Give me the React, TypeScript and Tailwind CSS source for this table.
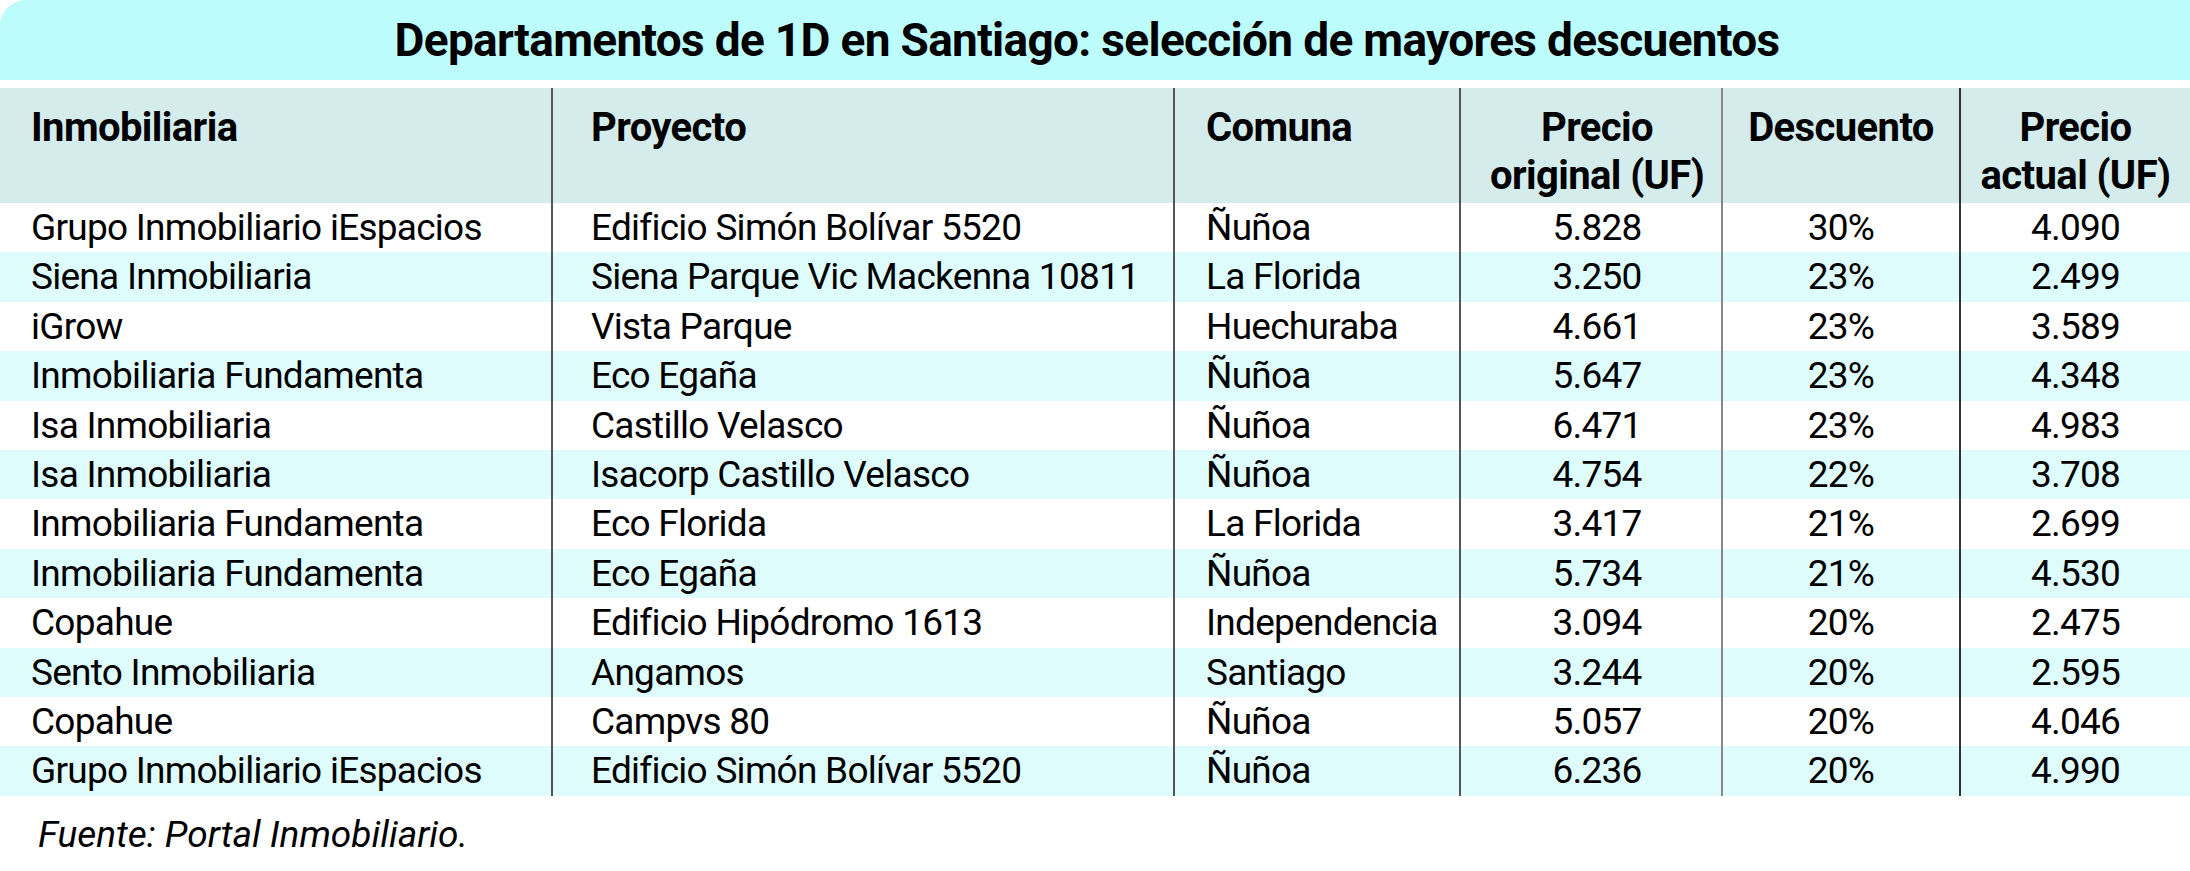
import React from 'react'

type Row = {
  inmobiliaria: string
  proyecto: string
  comuna: string
  original: string
  descuento: string
  actual: string
}

const rows: Row[] = [
  { inmobiliaria: 'Grupo Inmobiliario iEspacios', proyecto: 'Edificio Simón Bolívar 5520', comuna: 'Ñuñoa', original: '5.828', descuento: '30%', actual: '4.090' },
  { inmobiliaria: 'Siena Inmobiliaria', proyecto: 'Siena Parque Vic Mackenna 10811', comuna: 'La Florida', original: '3.250', descuento: '23%', actual: '2.499' },
  { inmobiliaria: 'iGrow', proyecto: 'Vista Parque', comuna: 'Huechuraba', original: '4.661', descuento: '23%', actual: '3.589' },
  { inmobiliaria: 'Inmobiliaria Fundamenta', proyecto: 'Eco Egaña', comuna: 'Ñuñoa', original: '5.647', descuento: '23%', actual: '4.348' },
  { inmobiliaria: 'Isa Inmobiliaria', proyecto: 'Castillo Velasco', comuna: 'Ñuñoa', original: '6.471', descuento: '23%', actual: '4.983' },
  { inmobiliaria: 'Isa Inmobiliaria', proyecto: 'Isacorp Castillo Velasco', comuna: 'Ñuñoa', original: '4.754', descuento: '22%', actual: '3.708' },
  { inmobiliaria: 'Inmobiliaria Fundamenta', proyecto: 'Eco Florida', comuna: 'La Florida', original: '3.417', descuento: '21%', actual: '2.699' },
  { inmobiliaria: 'Inmobiliaria Fundamenta', proyecto: 'Eco Egaña', comuna: 'Ñuñoa', original: '5.734', descuento: '21%', actual: '4.530' },
  { inmobiliaria: 'Copahue', proyecto: 'Edificio Hipódromo 1613', comuna: 'Independencia', original: '3.094', descuento: '20%', actual: '2.475' },
  { inmobiliaria: 'Sento Inmobiliaria', proyecto: 'Angamos', comuna: 'Santiago', original: '3.244', descuento: '20%', actual: '2.595' },
  { inmobiliaria: 'Copahue', proyecto: 'Campvs 80', comuna: 'Ñuñoa', original: '5.057', descuento: '20%', actual: '4.046' },
  { inmobiliaria: 'Grupo Inmobiliario iEspacios', proyecto: 'Edificio Simón Bolívar 5520', comuna: 'Ñuñoa', original: '6.236', descuento: '20%', actual: '4.990' },
]

const font = "font-['Roboto','Liberation_Sans',sans-serif]"

export default function App() {
  return (
    <div className={`h-[871px] w-[2190px] bg-white text-black ${font}`}>
      {/* Title band */}
      <div className="flex h-[80px] items-center justify-center rounded-tl-[26px] bg-[#bdfcfc] pr-[16px]">
        <h1 className="text-[46px] font-bold leading-[80px] tracking-[-0.015em]">
          Departamentos de 1D en Santiago: selección de mayores descuentos
        </h1>
      </div>

      {/* Table */}
      <div className="mt-[8px] grid grid-cols-[551px_622px_286px_262px_238px_231px]">
        {/* Header */}
        <div className="h-[115px] bg-[#d4ecec] pl-[31px] pt-[16px] text-[40px] font-bold leading-[48px] tracking-[-0.015em]">
          Inmobiliaria
        </div>
        <div className="h-[115px] border-l-2 border-[#555] bg-[#d4ecec] pl-[38px] pt-[16px] text-[40px] font-bold leading-[48px] tracking-[-0.015em]">
          Proyecto
        </div>
        <div className="h-[115px] border-l-2 border-[#555] bg-[#d4ecec] pl-[31px] pt-[16px] text-[40px] font-bold leading-[48px] tracking-[-0.015em]">
          Comuna
        </div>
        <div className="h-[115px] border-l-2 border-[#555] bg-[#d4ecec] pl-[12px] pt-[16px] text-center text-[40px] font-bold leading-[48px] tracking-[-0.015em]">
          Precio
          <br />
          original (UF)
        </div>
        <div className="h-[115px] border-l-2 border-[#888] bg-[#d4ecec] pt-[16px] text-center text-[40px] font-bold leading-[48px] tracking-[-0.015em]">
          Descuento
        </div>
        <div className="h-[115px] border-l-2 border-[#333] bg-[#d4ecec] pt-[16px] text-center text-[40px] font-bold leading-[48px] tracking-[-0.015em]">
          Precio
          <br />
          actual (UF)
        </div>

        {/* Body */}
        {rows.map((r, i) => {
          const bg = i % 2 === 0 ? 'bg-white' : 'bg-[#dffcfc]'
          const cell = `h-[49.4px] whitespace-nowrap text-[37px] leading-[49.4px] tracking-[-0.02em] ${bg}`
          return (
            <React.Fragment key={i}>
              <div className={`${cell} pl-[31px]`}>{r.inmobiliaria}</div>
              <div className={`${cell} border-l-2 border-[#555] pl-[38px]`}>{r.proyecto}</div>
              <div className={`${cell} border-l-2 border-[#555] pl-[31px]`}>{r.comuna}</div>
              <div className={`${cell} border-l-2 border-[#555] pl-[12px] text-center`}>{r.original}</div>
              <div className={`${cell} border-l-2 border-[#888] text-center`}>{r.descuento}</div>
              <div className={`${cell} border-l-2 border-[#333] text-center`}>{r.actual}</div>
            </React.Fragment>
          )
        })}
      </div>

      {/* Source */}
      <p className="mt-[14px] pl-[38px] text-[37px] italic leading-[50px]">
        Fuente: Portal Inmobiliario.
      </p>
    </div>
  )
}
